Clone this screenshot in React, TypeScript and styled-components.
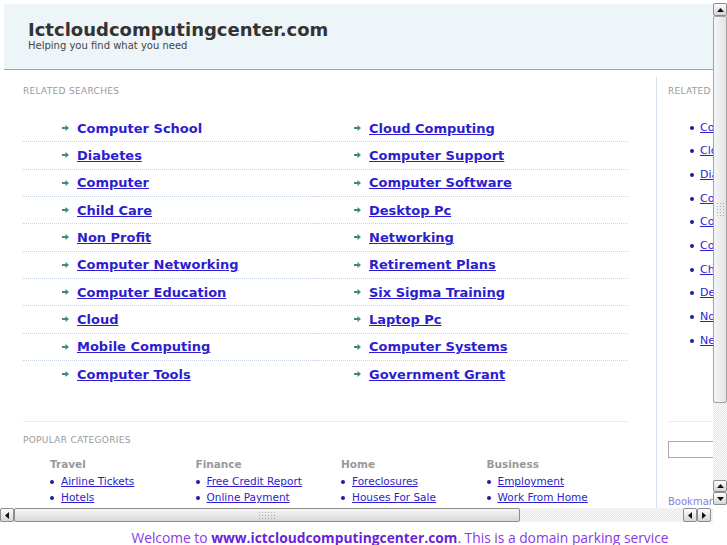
import React from 'react';
import styled, { createGlobalStyle } from 'styled-components';

const GlobalStyle = createGlobalStyle`
  html, body {
    margin: 0;
    padding: 0;
    background: #fff;
  }
  body {
    font-family: 'DejaVu Sans', Verdana, sans-serif;
  }
`;

const Screen = styled.div`
  width: 727px;
  height: 545px;
  padding-top: 3px;
  box-sizing: border-box;
  overflow: hidden;
`;

const Frame = styled.div`
  display: grid;
  grid-template-columns: 713px 14px;
  grid-template-rows: 505px 14px;
`;

const Viewport = styled.div`
  overflow: hidden;
  padding: 1px 0 0 4px;
`;

const PageInner = styled.div`
  width: 960px;
`;

const Header = styled.div`
  height: 50px;
  padding: 15px 0 0 24px;
  background: #eef5f8;
  border-bottom: 1px solid #8ea4da;
`;

const SiteTitle = styled.div`
  font-size: 18px;
  font-weight: 700;
  line-height: 21px;
  color: #333;
`;

const Tagline = styled.div`
  font-size: 10px;
  line-height: 12px;
  color: #444;
`;

const Body = styled.div`
  display: flex;
  align-items: flex-start;
`;

const Main = styled.div`
  width: 605px;
  padding: 16px 28px 0 19px;
  flex-shrink: 0;
`;

const Sidebar = styled.div`
  margin-top: 7px;
  padding: 9px 0 0 11px;
  border-left: 1px solid #d6e0ef;
  width: 220px;
  height: 440px;
`;

const SectionLabel = styled.div`
  font-size: 9px;
  line-height: 10px;
  letter-spacing: 0.3px;
  color: #999;
  text-transform: uppercase;
`;

const SearchGrid = styled.div`
  display: grid;
  grid-template-columns: 292px 313px;
  margin-top: 19px;
`;

const SearchCell = styled.div<{ $last: boolean }>`
  height: 26.33px;
  display: flex;
  align-items: center;
  gap: 8px;
  padding-left: 39px;
  border-bottom: ${p => (p.$last ? '1px solid transparent' : '1px dotted #c5d2e6')};
`;

const SearchLink = styled.a<{ $plain?: boolean }>`
  font-size: 13px;
  font-weight: 700;
  color: #2d1dd0;
  text-decoration: ${p => (p.$plain ? 'none' : 'underline')};
  cursor: pointer;
`;

const Divider = styled.div<{ $top: number }>`
  margin-top: ${p => p.$top}px;
  border-top: 1px solid #e4ecf6;
`;

const PopularLabel = styled(SectionLabel)`
  margin-top: 13px;
`;

const CategoryGrid = styled.div`
  display: grid;
  grid-template-columns: repeat(4, 145.5px);
  margin: 13px 0 0 27px;
`;

const CategoryTitle = styled.div`
  font-size: 10.5px;
  font-weight: 700;
  line-height: 13px;
  color: #999;
  margin-bottom: 2px;
`;

const CategoryItem = styled.div`
  display: flex;
  align-items: center;
  gap: 7px;
  height: 16px;
`;

const Dot = styled.span`
  width: 4px;
  height: 4px;
  border-radius: 50%;
  background: #1c1c9c;
  flex-shrink: 0;
  margin-top: 1px;
`;

const SmallLink = styled.a<{ $size: number }>`
  font-size: ${p => p.$size}px;
  color: #2d1dd0;
  text-decoration: underline;
  white-space: nowrap;
  cursor: pointer;
`;

const SideList = styled.div`
  margin-top: 19.5px;
`;

const SideItem = styled.div`
  display: flex;
  align-items: center;
  gap: 6px;
  height: 23.67px;
  padding-left: 22px;
`;

const SideInput = styled.div`
  margin-top: 19px;
  width: 140px;
  height: 15px;
  border: 1px solid #a9a9a9;
`;

const Bookmark = styled.div`
  margin-top: 38px;
  font-size: 10px;
  color: #8282d8;
`;

/* scrollbars */

const VBar = styled.div`
  display: flex;
  flex-direction: column;
  height: 502px;
  background: repeating-conic-gradient(#e6e6e6 0 25%, #fbfbfb 0 50%) 0 0 / 2px 2px;
`;

const HBar = styled.div`
  display: flex;
  padding-right: 2px;
  background: repeating-conic-gradient(#e6e6e6 0 25%, #fbfbfb 0 50%) 0 0 / 2px 2px;
`;

const Corner = styled.div`
  background: #fff;
`;

const ArrowButton = styled.div<{ $h: number }>`
  width: 14px;
  height: ${p => p.$h}px;
  box-sizing: border-box;
  flex-shrink: 0;
  display: flex;
  align-items: center;
  justify-content: center;
  border: 1px solid #8d8d8d;
  border-radius: 2px;
  background: linear-gradient(#fdfdfd, #d6d6d6);
`;

const VThumb = styled.div`
  height: 387px;
  box-sizing: border-box;
  display: flex;
  align-items: center;
  justify-content: center;
  border: 1px solid #a3a3a3;
  border-radius: 2px;
  background: linear-gradient(to right, #f4f6f8, #e1e3e6);
`;

const HThumb = styled.div`
  width: 506px;
  box-sizing: border-box;
  display: flex;
  align-items: center;
  justify-content: center;
  border: 1px solid #8d8d8d;
  border-radius: 2px;
  background: linear-gradient(#f6f6f6, #d8d8d8);
`;

const Track = styled.div`
  flex: 1;
`;

const Grip = styled.div<{ $w: number; $h: number }>`
  width: ${p => p.$w}px;
  height: ${p => p.$h}px;
  background-image: radial-gradient(circle, #b0b0b0 0.7px, transparent 0.9px);
  background-size: 3px 3px;
`;

const Footer = styled.div`
  width: 800px;
  padding-top: 6px;
  text-align: center;
  white-space: nowrap;
  font-family: 'Open Sans', 'DejaVu Sans', sans-serif;
  font-size: 13.8px;
  color: #8a3ae4;
  b {
    color: #6c1fd8;
  }
`;

const Arrow = () => (
  <svg width="7" height="6" viewBox="0 0 7 6">
    <path d="M0 2h3.5V0L7 3 3.5 6V4H0z" fill="#3c8b7d" />
  </svg>
);

const Tri = ({ dir }: { dir: 'up' | 'down' | 'left' | 'right' }) => {
  const d = {
    up: 'M0 4L3.5 0 7 4z',
    down: 'M0 0h7L3.5 4z',
    left: 'M4 0v7L0 3.5z',
    right: 'M0 0l4 3.5L0 7z',
  }[dir];
  const vertical = dir === 'up' || dir === 'down';
  return (
    <svg width={vertical ? 7 : 4} height={vertical ? 4 : 7}>
      <path d={d} fill="#111" />
    </svg>
  );
};

const searches: [string, string][] = [
  ['Computer School', 'Cloud Computing'],
  ['Diabetes', 'Computer Support'],
  ['Computer', 'Computer Software'],
  ['Child Care', 'Desktop Pc'],
  ['Non Profit', 'Networking'],
  ['Computer Networking', 'Retirement Plans'],
  ['Computer Education', 'Six Sigma Training'],
  ['Cloud', 'Laptop Pc'],
  ['Mobile Computing', 'Computer Systems'],
  ['Computer Tools', 'Government Grant'],
];

const categories = [
  { title: 'Travel', links: ['Airline Tickets', 'Hotels'] },
  { title: 'Finance', links: ['Free Credit Report', 'Online Payment'] },
  { title: 'Home', links: ['Foreclosures', 'Houses For Sale'] },
  { title: 'Business', links: ['Employment', 'Work From Home'] },
];

const sideLinks = [
  'Computer School',
  'Cloud Computing',
  'Diabetes',
  'Computer Support',
  'Computer',
  'Computer Software',
  'Child Care',
  'Desktop Pc',
  'Non Profit',
  'Networking',
];

export default function App() {
  return (
    <Screen>
      <GlobalStyle />
      <Frame>
        <Viewport>
          <PageInner>
            <Header>
              <SiteTitle>Ictcloudcomputingcenter.com</SiteTitle>
              <Tagline>Helping you find what you need</Tagline>
            </Header>
            <Body>
              <Main>
                <SectionLabel>Related Searches</SectionLabel>
                <SearchGrid>
                  {searches.map((pair, row) =>
                    pair.map((label, col) => (
                      <SearchCell key={label} $last={row === searches.length - 1}>
                        <Arrow />
                        <SearchLink $plain={row === 0 && col === 0}>{label}</SearchLink>
                      </SearchCell>
                    ))
                  )}
                </SearchGrid>
                <Divider $top={33} />
                <PopularLabel>Popular Categories</PopularLabel>
                <CategoryGrid>
                  {categories.map(cat => (
                    <div key={cat.title}>
                      <CategoryTitle>{cat.title}</CategoryTitle>
                      {cat.links.map(l => (
                        <CategoryItem key={l}>
                          <Dot />
                          <SmallLink $size={10.5}>{l}</SmallLink>
                        </CategoryItem>
                      ))}
                    </div>
                  ))}
                </CategoryGrid>
              </Main>
              <Sidebar>
                <SectionLabel>Related</SectionLabel>
                <SideList>
                  {sideLinks.map(l => (
                    <SideItem key={l}>
                      <Dot />
                      <SmallLink $size={11}>{l}</SmallLink>
                    </SideItem>
                  ))}
                </SideList>
                <Divider $top={69} />
                <SideInput />
                <Bookmark>Bookmark this page</Bookmark>
              </Sidebar>
            </Body>
          </PageInner>
        </Viewport>
        <VBar>
          <ArrowButton $h={13}>
            <Tri dir="up" />
          </ArrowButton>
          <VThumb>
            <Grip $w={9} $h={15} />
          </VThumb>
          <Track />
          <ArrowButton $h={12}>
            <Tri dir="up" />
          </ArrowButton>
          <ArrowButton $h={13}>
            <Tri dir="down" />
          </ArrowButton>
        </VBar>
        <HBar>
          <ArrowButton $h={14}>
            <Tri dir="left" />
          </ArrowButton>
          <HThumb>
            <Grip $w={18} $h={8} />
          </HThumb>
          <Track />
          <ArrowButton $h={14}>
            <Tri dir="left" />
          </ArrowButton>
          <ArrowButton $h={14}>
            <Tri dir="right" />
          </ArrowButton>
        </HBar>
        <Corner />
      </Frame>
      <Footer>
        Welcome to <b>www.ictcloudcomputingcenter.com</b>. This is a domain parking service
      </Footer>
    </Screen>
  );
}
